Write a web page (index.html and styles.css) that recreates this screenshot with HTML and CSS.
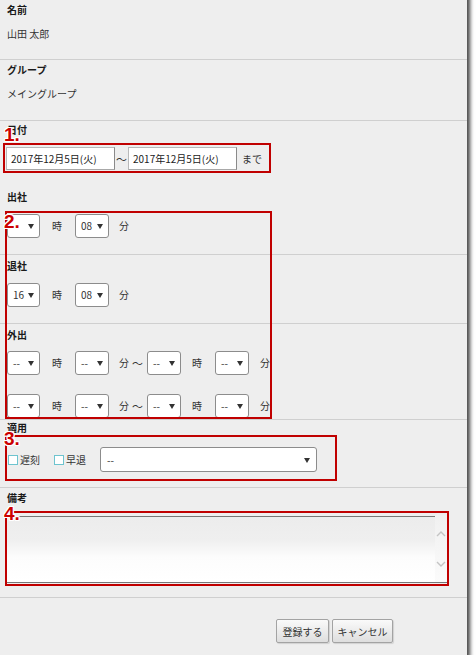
FILE: index.html
```html
<!DOCTYPE html>
<html lang="ja">
<head>
<meta charset="utf-8">
<title>勤怠編集</title>
<link rel="stylesheet" href="styles.css">
</head>
<body>
<div class="panel">
  <div class="content">
    <section class="sec s-name">
      <div class="lbl">名前</div>
      <div class="val">山田 太郎</div>
    </section>
    <section class="sec s-group">
      <div class="lbl">グループ</div>
      <div class="val">メイングループ</div>
    </section>
    <section class="sec s-date">
      <div class="lbl">日付</div>
      <div class="row date-row">
        <input class="date" type="text" value="2017年12月5日(火)">
        <span class="tilde">〜</span>
        <input class="date" type="text" value="2017年12月5日(火)">
        <span class="made">まで</span>
      </div>
    </section>
    <section class="sec s-in">
      <div class="lbl">出社</div>
      <div class="row">
        <span class="sel"><span class="sv"></span><i class="arr"></i></span><span class="u u-h">時</span>
        <span class="sel s2"><span class="sv">08</span><i class="arr"></i></span><span class="u u-m">分</span>
      </div>
    </section>
    <section class="sec s-out">
      <div class="lbl">退社</div>
      <div class="row">
        <span class="sel"><span class="sv">16</span><i class="arr"></i></span><span class="u u-h">時</span>
        <span class="sel s2"><span class="sv">08</span><i class="arr"></i></span><span class="u u-m">分</span>
      </div>
    </section>
    <section class="sec s-go">
      <div class="lbl">外出</div>
      <div class="row">
        <span class="sel"><span class="sv">--</span><i class="arr"></i></span><span class="u u-h">時</span>
        <span class="sel s2"><span class="sv">--</span><i class="arr"></i></span><span class="u u-m">分</span><span class="u u-t">〜</span>
        <span class="sel s3"><span class="sv">--</span><i class="arr"></i></span><span class="u u-h2">時</span>
        <span class="sel s2"><span class="sv">--</span><i class="arr"></i></span><span class="u u-m2">分</span>
      </div>
      <div class="row row2">
        <span class="sel"><span class="sv">--</span><i class="arr"></i></span><span class="u u-h">時</span>
        <span class="sel s2"><span class="sv">--</span><i class="arr"></i></span><span class="u u-m">分</span><span class="u u-t">〜</span>
        <span class="sel s3"><span class="sv">--</span><i class="arr"></i></span><span class="u u-h2">時</span>
        <span class="sel s2"><span class="sv">--</span><i class="arr"></i></span><span class="u u-m2">分</span>
      </div>
    </section>
    <section class="sec s-apply">
      <div class="lbl">適用</div>
      <div class="row">
        <label class="chk"><span class="cb"></span>遅刻</label>
        <label class="chk chk2"><span class="cb"></span>早退</label>
        <span class="sel big"><span class="sv">--</span><i class="arr"></i></span>
      </div>
    </section>
    <section class="sec s-note">
      <div class="lbl">備考</div>
      <div class="ta">
        <textarea class="ta-body"></textarea>
        <div class="ta-scroll">
          <svg width="12" height="12" viewBox="0 0 12 12"><polyline points="2,8 6,4 10,8" fill="none" stroke="#c4c4c4" stroke-width="1.4"/></svg>
          <svg width="12" height="12" viewBox="0 0 12 12"><polyline points="2,4 6,8 10,4" fill="none" stroke="#c4c4c4" stroke-width="1.4"/></svg>
        </div>
      </div>
    </section>
    <div class="actions">
      <button class="btn btn-ok" type="button">登録する</button>
      <button class="btn btn-cancel" type="button">キャンセル</button>
    </div>

    <div class="mark m1"></div>
    <div class="mark m2"></div>
    <div class="mark m3"></div>
    <div class="mark m4"></div>
    <span class="num n1">1.</span>
    <span class="num n2">2.</span>
    <span class="num n3">3.</span>
    <span class="num n4">4.</span>
  </div>
</div>
</body>
</html>
```

FILE: styles.css
```css
html, body {
  margin: 0;
  padding: 0;
  background: #ffffff;
}
body {
  font-family: "Noto Sans CJK JP", "Noto Sans", sans-serif;
  font-size: 10px;
  color: #222;
  overflow: hidden;
}
.panel {
  width: 467px;
  height: 665px;
  margin-top: -10px;
  padding-top: 10px;
  box-sizing: border-box;
  background: #eeeeee;
  box-shadow: 1px 1px 0 #5a5a5a, 3px 3px 4px rgba(0, 0, 0, 0.75);
}
.content {
  position: relative;
}
.sec {
  border-bottom: 1px solid #cfcfcf;
  padding: 0 7px;
}
.lbl {
  font-weight: bold;
  line-height: 14px;
  height: 14px;
  color: #1a1a1a;
}
.val {
  line-height: 14px;
  margin-top: 10px;
  color: #333;
}
.s-name { padding-top: 3px; padding-bottom: 18px; }
.s-group { padding-top: 3px; padding-bottom: 19px; }
.s-date { padding-top: 2px; padding-bottom: 15px; border-bottom: none; }
.s-in { padding-top: 5px; padding-bottom: 16px; }
.s-out { padding-top: 4px; padding-bottom: 16px; }
.s-go { padding-top: 4px; padding-bottom: 1px; }
.s-apply { padding-top: 1px; padding-bottom: 15px; }
.s-note { padding-top: 3px; padding-bottom: 14px; }

.row {
  display: flex;
  align-items: center;
  margin-top: 10px;
  height: 24px;
}
.s-go .row { margin-top: 9px; }
.s-go .row2 { margin-top: 19px; }
.s-apply .row { margin-top: 12px; height: 25px; }

.date-row { height: 23px; margin-top: 10px; margin-left: -1px; }
.date {
  width: 109px;
  height: 23px;
  box-sizing: border-box;
  border: 1px solid #b9b9b9;
  border-right-color: #8a8a8a;
  border-bottom-color: #a8a8a8;
  background: #fff;
  font-family: "Noto Sans CJK JP", sans-serif;
  font-size: 10px;
  color: #222;
  padding: 0 0 0 4px;
  margin: 0;
}
.tilde { width: 13px; text-align: center; color: #333; font-size: 11px; }
.made { margin-left: 5px; color: #333; }

.sel {
  display: inline-flex;
  align-items: center;
  justify-content: space-between;
  width: 33px;
  height: 24px;
  box-sizing: border-box;
  border: 1px solid #8c8c8c;
  border-radius: 3px;
  background: #fff;
  padding: 0 5px;
  color: #333;
}
.sel.s2 { margin-left: 13px; width: 34px; }
.sel.s3 { margin-left: 4px; width: 34px; }
.sel.big { width: 217px; height: 25px; margin-left: 14px; padding: 0 6px; }
.sv { line-height: 14px; }
.arr {
  width: 0;
  height: 0;
  border-left: 3px solid transparent;
  border-right: 3px solid transparent;
  border-top: 5px solid #333;
  margin-top: 1px;
}
.u { color: #333; line-height: 14px; }
.u-h { margin-left: 12px; }
.u-m { margin-left: 10px; }
.u-t { margin-left: 3px; font-size: 11px; }
.u-h2 { margin-left: 11px; }
.u-m2 { margin-left: 11px; }

.chk {
  display: inline-flex;
  align-items: center;
  color: #333;
  line-height: 14px;
}
.chk2 { margin-left: 13px; }
.cb {
  width: 10px;
  height: 10px;
  box-sizing: border-box;
  border: 1px solid #6ec4cf;
  background: #fff;
  margin-right: 2px;
  margin-left: 1px;
}

.ta {
  display: flex;
  width: 440px;
  height: 68px;
  margin-top: 10px;
  box-sizing: border-box;
  border-bottom: 1px solid #777;
}
.ta-body {
  flex: 1;
  margin: 1px 0 0;
  padding: 2px;
  border: none;
  border-top: 1px solid #777;
  resize: none;
  outline: none;
  font-family: "Noto Sans CJK JP", sans-serif;
  font-size: 10px;
  background: linear-gradient(to bottom, #ececec 0%, #efefef 35%, #fcfcfc 62%, #ffffff 100%);
}
.ta-scroll {
  width: 12px;
  display: flex;
  flex-direction: column;
  justify-content: space-between;
  align-items: center;
  padding: 13px 0 12px;
  box-sizing: border-box;
  background: linear-gradient(to bottom, #f0f0f0, #fbfbfb);
}
.ta-scroll svg { display: block; }

.actions {
  display: flex;
  justify-content: flex-end;
  gap: 3px;
  padding: 21px 74px 0 0;
}
.btn {
  height: 24px;
  padding: 0;
  box-sizing: border-box;
  border: 1px solid #a3a3a3;
  border-radius: 2px;
  background: linear-gradient(to bottom, #fafafa, #dedede);
  font-family: "Noto Sans CJK JP", sans-serif;
  font-size: 10px;
  color: #333;
  box-shadow: 1px 1px 1px rgba(0,0,0,0.12);
}
.btn-ok { width: 53px; }
.btn-cancel { width: 61px; }

.mark {
  position: absolute;
  border: 2px solid #c00000;
  box-sizing: border-box;
}
.m1 { left: 3px; top: 143px; width: 268px; height: 30px; }
.m2 { left: 5px; top: 211px; width: 267px; height: 208px; }
.m3 { left: 5px; top: 435px; width: 332px; height: 46px; }
.m4 { left: 5px; top: 511px; width: 444px; height: 75px; }

.num {
  position: absolute;
  left: 4px;
  font-family: "Liberation Sans", Arial, sans-serif;
  font-weight: bold;
  font-size: 19px;
  line-height: 19px;
  color: #cc0000;
  text-shadow: 1px 0 0 #fff, -1px 0 0 #fff, 0 1px 0 #fff, 0 -1px 0 #fff,
               1px 1px 0 #fff, -1px -1px 0 #fff, 1px -1px 0 #fff, -1px 1px 0 #fff;
}
.n1 { top: 125px; }
.n2 { top: 212px; }
.n3 { top: 429px; }
.n4 { top: 504px; }
```
